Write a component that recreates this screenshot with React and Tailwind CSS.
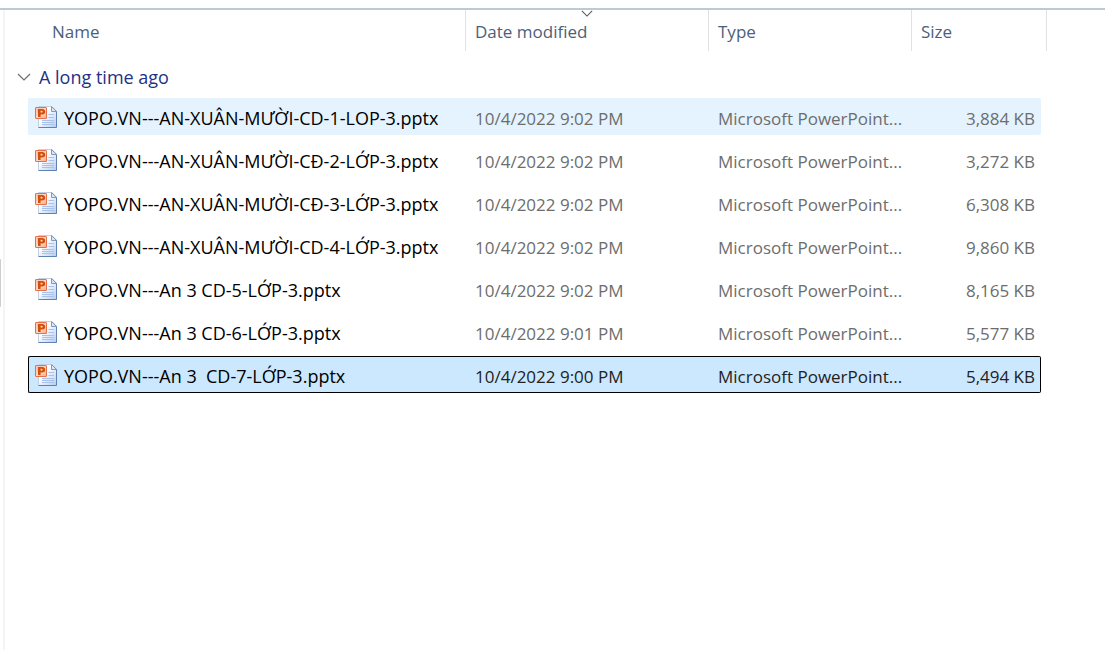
import React, { useState } from "react";

const files = [
  { name: "YOPO.VN---AN-XUÂN-MƯỜI-CD-1-LOP-3.pptx", date: "10/4/2022 9:02 PM", size: "3,884 KB" },
  { name: "YOPO.VN---AN-XUÂN-MƯỜI-CĐ-2-LỚP-3.pptx", date: "10/4/2022 9:02 PM", size: "3,272 KB" },
  { name: "YOPO.VN---AN-XUÂN-MƯỜI-CĐ-3-LỚP-3.pptx", date: "10/4/2022 9:02 PM", size: "6,308 KB" },
  { name: "YOPO.VN---AN-XUÂN-MƯỜI-CD-4-LỚP-3.pptx", date: "10/4/2022 9:02 PM", size: "9,860 KB" },
  { name: "YOPO.VN---An 3 CD-5-LỚP-3.pptx", date: "10/4/2022 9:02 PM", size: "8,165 KB" },
  { name: "YOPO.VN---An 3 CD-6-LỚP-3.pptx", date: "10/4/2022 9:01 PM", size: "5,577 KB" },
  { name: "YOPO.VN---An 3  CD-7-LỚP-3.pptx", date: "10/4/2022 9:00 PM", size: "5,494 KB" },
];

function PptIcon() {
  return (
    <svg className="size-6 shrink-0" viewBox="0 0 24 24" aria-hidden="true">
      <defs>
        <linearGradient id="page" x1="0" y1="0" x2="1" y2="1">
          <stop offset="0.35" stopColor="#ffffff" />
          <stop offset="1" stopColor="#b4cbf2" />
        </linearGradient>
        <linearGradient id="tile" x1="0" y1="0" x2="1" y2="1">
          <stop offset="0" stopColor="#f79a78" />
          <stop offset="0.5" stopColor="#fde0cd" />
          <stop offset="1" stopColor="#f8a880" />
        </linearGradient>
      </defs>
      <path d="M4.5 1.5H18L22.5 6V22.5H4.5Z" fill="url(#page)" stroke="#c3d0e2" />
      <path d="M22.5 6V22.5H4.5" fill="none" stroke="#5f82b4" />
      <path d="M17.5 1.5V6.5H22.5Z" fill="#dce7f5" stroke="#7f9abb" />
      <path d="M14.5 9.5H20M14.5 12.5H20M8 15.5H20M8 17.5H20M8 19.5H20" stroke="#a9c2ea" />
      <rect x="1.5" y="2.5" width="11" height="11" rx="0.5" fill="url(#tile)" stroke="#e5704e" />
      <path d="M2.5 12.5V3.5H11.5" fill="none" stroke="#fbcdbb" />
      <path d="M4 12V4H8.2C10.3 4 11.2 5.1 11.2 6.7C11.2 8.4 10.2 9.4 8.2 9.4H6.6V12ZM6.6 5.8V7.6H7.6C8.3 7.6 8.6 7.3 8.6 6.7C8.6 6.1 8.3 5.8 7.6 5.8Z" fill="#d24f0c" fillRule="evenodd" />
    </svg>
  );
}

function Chevron({ className }) {
  return (
    <svg className={className} viewBox="0 0 14 8" fill="none" stroke="currentColor" strokeWidth="1.2" aria-hidden="true">
      <path d="M1 1L7 7L13 1" />
    </svg>
  );
}

function HeaderCell({ label, pad, sorted }) {
  return (
    <th scope="col" aria-sort={sorted ? "descending" : undefined} className="relative h-[41px] border-r border-[#e2e2e2] p-0 text-left font-normal">
      <button type="button" className={`block h-[41px] w-full pt-0.5 text-left text-[#4c607a] ${pad}`}>
        {label}
      </button>
      {sorted && <Chevron className="absolute left-1/2 top-0 h-[7px] w-3 -translate-x-1/2 text-[#555555]" />}
    </th>
  );
}

function FileRow({ file, hovered, selected, onSelect }) {
  const fill = selected
    ? "border-black bg-[#cce8ff] text-[#222222]"
    : hovered
      ? "border-[#e5f3ff] bg-[#e5f3ff] text-[#6d6d6d]"
      : "border-transparent text-[#6d6d6d]";
  const box = `flex h-[37px] items-center border-y ${fill}`;
  return (
    <tr aria-selected={selected} onClick={onSelect}>
      <td className="py-[3px] pl-[23px] pr-0">
        <div className={`${box} gap-1.5 rounded-l-xs border-l pl-[5px]`}>
          <PptIcon />
          <span className="whitespace-pre pt-0.5 text-lg leading-6 text-black">{file.name}</span>
        </div>
      </td>
      <td className="px-0 py-[3px]">
        <div className={`${box} whitespace-nowrap pl-[9px] pt-1`}>{file.date}</div>
      </td>
      <td className="px-0 py-[3px]">
        <div className={`${box} whitespace-nowrap pl-[9px] pt-1`}>Microsoft PowerPoint...</div>
      </td>
      <td className="py-[3px] pl-0 pr-1.5">
        <div className={`${box} justify-end whitespace-nowrap rounded-r-xs border-r pr-[5px] pt-1`}>{file.size}</div>
      </td>
      <td />
    </tr>
  );
}

export default function App() {
  const [selected, setSelected] = useState(6);
  const [open, setOpen] = useState(true);
  return (
    <div className="flex min-h-screen flex-col bg-white pt-2 font-['Open_Sans','Noto_Sans',sans-serif] text-[17px] leading-6">
      <div className="flex grow border-t-2 border-[#bccad8]">
        <div className="w-[3px] shrink-0 pt-[249px]">
          <div className="h-12 w-px rounded-r-xs bg-[#cdcdcd]" />
        </div>
        <main className="min-w-0 grow border-l-2 border-[#f5f5f5]">
          <table className="w-full table-fixed border-separate border-spacing-0">
            <colgroup>
              <col className="w-[461px]" />
              <col className="w-[243px]" />
              <col className="w-[203px]" />
              <col className="w-[135px]" />
              <col />
            </colgroup>
            <thead>
              <tr>
                <HeaderCell label="Name" pad="pl-[47px]" />
                <HeaderCell label="Date modified" pad="pl-[9px]" sorted />
                <HeaderCell label="Type" pad="pl-[9px]" />
                <HeaderCell label="Size" pad="pl-[9px]" />
                <td />
              </tr>
            </thead>
            <tbody>
              <tr>
                <th colSpan={5} scope="rowgroup" className="h-11 p-0 text-left font-normal">
                  <button
                    type="button"
                    aria-expanded={open}
                    onClick={() => setOpen(!open)}
                    className="flex items-center gap-2 pl-3 pt-2 text-lg leading-6 text-[#1e3287]"
                  >
                    <Chevron className="h-2 w-3.5 text-[#6d6d6d]" />
                    A long time ago
                  </button>
                </th>
              </tr>
              {open &&
                files.map((file, i) => (
                  <FileRow
                    key={file.name}
                    file={file}
                    hovered={i === 0}
                    selected={i === selected}
                    onSelect={() => setSelected(i)}
                  />
                ))}
            </tbody>
          </table>
        </main>
      </div>
    </div>
  );
}
